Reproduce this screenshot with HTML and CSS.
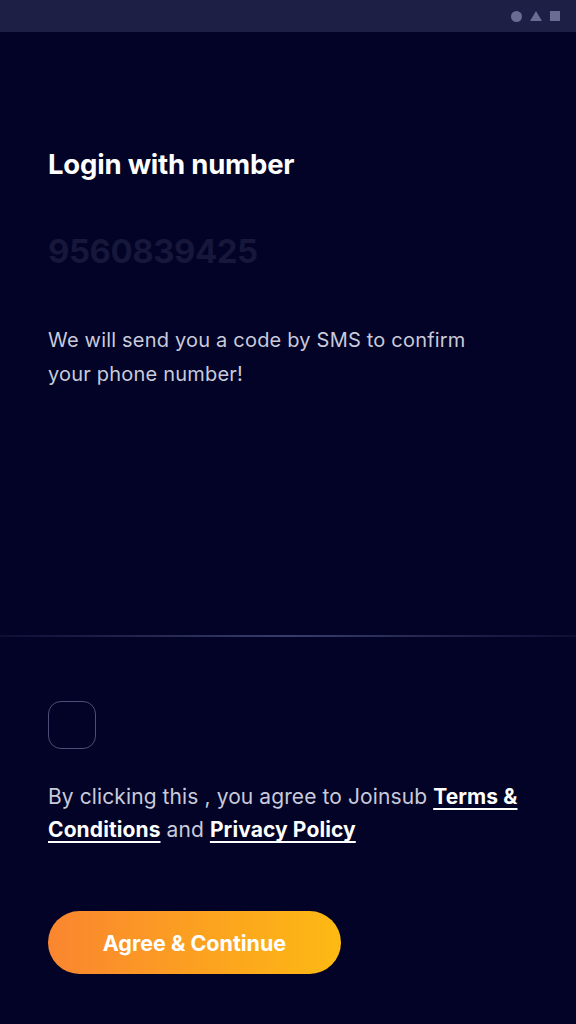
FILE: index.html
```html
<!DOCTYPE html>
<html lang="en">
<head>
<meta charset="utf-8">
<title>Login with number</title>
<link rel="stylesheet" href="styles.css">
</head>
<body>
<div class="screen">
  <div class="statusbar">
    <span class="ic-circle"></span>
    <span class="ic-triangle"></span>
    <span class="ic-square"></span>
  </div>
  <main class="top">
    <h1 class="title">Login with number</h1>
    <div class="phone">9560839425</div>
    <p class="info">We will send you a code by SMS to confirm your phone number!</p>
  </main>
  <div class="divider"></div>
  <section class="bottom">
    <div class="checkbox"></div>
    <p class="terms">By clicking this , you agree to Joinsub <a href="#" class="link">Terms&nbsp;&amp;</a> <a href="#" class="link">Conditions</a> and <a href="#" class="link">Privacy Policy</a></p>
    <button class="cta">Agree &amp; Continue</button>
  </section>
</div>
</body>
</html>
```
FILE: styles.css
```css
* { box-sizing: border-box; }
html, body { margin: 0; padding: 0; }
body {
  background: #020326;
  font-family: "Inter", "Noto Sans", sans-serif;
  color: #fff;
}
.screen {
  width: 576px;
  height: 1024px;
  display: flex;
  flex-direction: column;
  background: #020326;
}
.statusbar {
  height: 32px;
  background: #1e1f45;
  display: flex;
  justify-content: flex-end;
  align-items: center;
  gap: 8px;
  padding-right: 16px;
}
.ic-circle {
  width: 11px; height: 11px; border-radius: 50%;
  background: #6b6c93;
}
.ic-triangle {
  width: 0; height: 0;
  border-left: 6px solid transparent;
  border-right: 6px solid transparent;
  border-bottom: 10px solid #6b6c93;
}
.ic-square {
  width: 10px; height: 10px; background: #6b6c93;
}
.top {
  padding: 115px 48px 0;
  height: 603px;
}
.title {
  margin: 0;
  font-size: 27.5px;
  font-weight: 700;
  line-height: 34px;
  letter-spacing: -0.2px;
}
.phone {
  margin-top: 50px;
  font-size: 33px;
  font-weight: 700;
  line-height: 40px;
  color: #16173a;
  letter-spacing: -0.5px;
}
.info {
  margin: 52px 0 0;
  max-width: 450px;
  font-size: 20px;
  line-height: 34px;
  color: #c9cadb;
  font-weight: 400;
  letter-spacing: 0.2px;
}
.divider {
  height: 2px;
  background: linear-gradient(90deg, rgba(58,60,108,0.2), #3a3c6c 50%, rgba(58,60,108,0.2));
}
.bottom {
  padding: 64px 48px 0;
  display: flex;
  flex-direction: column;
  align-items: flex-start;
}
.checkbox {
  width: 48px; height: 48px;
  border: 1.5px solid #4e4f78;
  border-radius: 13px;
}
.terms {
  margin: 31px 0 0;
  font-size: 21px;
  line-height: 33px;
  color: #c9cadb;
  letter-spacing: 0.1px;
}
.link {
  color: #fff;
  font-weight: 700;
  text-decoration: underline;
  text-underline-offset: 4px;
  text-decoration-thickness: 1.5px;
}
.cta {
  margin-top: 65px;
  width: 293px;
  height: 63px;
  border: 0;
  border-radius: 32px;
  background: linear-gradient(90deg, #fa862f, #fdba13);
  color: #fff;
  font-family: inherit;
  font-size: 21.5px;
  font-weight: 700;
}
```
